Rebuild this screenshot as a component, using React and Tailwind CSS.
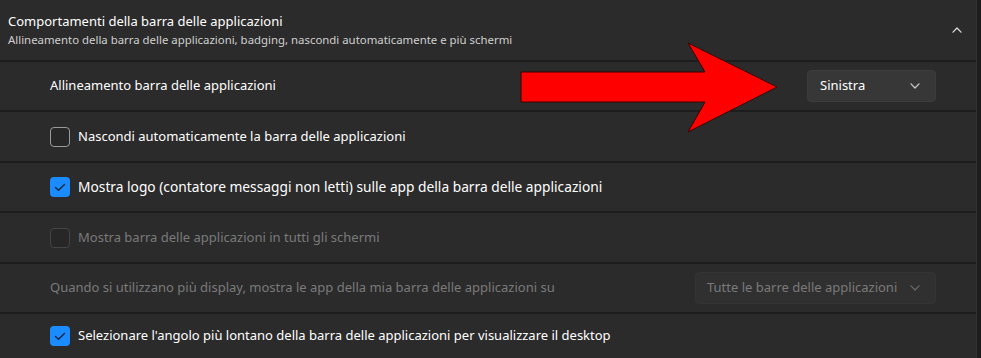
import React from "react";

const font = { fontFamily: '"Segoe UI", "Noto Sans", "Open Sans", sans-serif' };

function Chevron({ className = "", up = false }) {
  return (
    <svg width="10" height="6" viewBox="0 0 10 6" className={className} fill="none">
      <path
        d={up ? "M1 5.2 L5 1 L9 5.2" : "M1 0.8 L5 5 L9 0.8"}
        stroke="currentColor"
        strokeWidth="1.2"
        strokeLinecap="round"
        strokeLinejoin="round"
      />
    </svg>
  );
}

function Checkbox({ checked, disabled }) {
  if (checked) {
    return (
      <div className="w-[20px] h-[20px] rounded-[4px] bg-[#1a8cff] flex items-center justify-center shrink-0">
        <svg width="12" height="9" viewBox="0 0 12 9" fill="none">
          <path d="M1.5 4.5 L4.5 7.3 L10.5 1.5" stroke="#0a2540" strokeWidth="1.4" strokeLinecap="round" strokeLinejoin="round" />
        </svg>
      </div>
    );
  }
  return (
    <div
      className={
        "w-[20px] h-[20px] rounded-[4px] border shrink-0 bg-[#272727] " +
        (disabled ? "border-[#444444]" : "border-[#9a9a9a]")
      }
    />
  );
}

function Sep() {
  return <div className="h-[2px] bg-[#1d1d1d]" />;
}

function Row({ h, children }) {
  return (
    <div className="flex items-center pl-[50px] pr-[40px] bg-[#2b2b2b] whitespace-nowrap" style={{ height: h }}>
      {children}
    </div>
  );
}

export default function App() {
  return (
    <div className="w-[981px] h-[358px] overflow-hidden bg-[#1d1d1d] flex" style={font}>
      <div className="w-[977px] relative border-r border-[#333333] flex flex-col">
        {/* Header */}
        <div className="h-[60px] bg-[#2b2b2b] flex items-center pl-[8px] pr-[14px]">
          <div className="flex-1 flex flex-col">
            <div className="text-[13px] leading-[18px] text-[#ffffff]">Comportamenti della barra delle applicazioni</div>
            <div className="text-[11.4px] leading-[16px] text-[#cfcfcf] mt-[2px]">
              Allineamento della barra delle applicazioni, badging, nascondi automaticamente e più schermi
            </div>
          </div>
          <Chevron up className="text-[#e0e0e0]" />
        </div>
        <Sep />
        <Row h={48}>
          <div className="flex-1 text-[13px] text-[#ffffff]">Allineamento barra delle applicazioni</div>
          <div className="w-[129px] h-[32px] rounded-[4px] bg-[#373737] border border-[#3c3c3c] flex items-center justify-between pl-[12px] pr-[15px]">
            <span className="text-[13px] text-[#ffffff]">Sinistra</span>
            <Chevron className="text-[#cccccc]" />
          </div>
        </Row>
        <Sep />
        <Row h={49}>
          <Checkbox />
          <span className="ml-[8px] text-[13px] text-[#ffffff]">Nascondi automaticamente la barra delle applicazioni</span>
        </Row>
        <Sep />
        <Row h={48}>
          <Checkbox checked />
          <span className="ml-[8px] text-[13.75px] text-[#ffffff]">
            Mostra logo (contatore messaggi non letti) sulle app della barra delle applicazioni
          </span>
        </Row>
        <Sep />
        <Row h={49}>
          <Checkbox disabled />
          <span className="ml-[8px] text-[13px] text-[#7a7a7a]">Mostra barra delle applicazioni in tutti gli schermi</span>
        </Row>
        <Sep />
        <Row h={48}>
          <div className="flex-1 text-[13px] text-[#7a7a7a]">
            Quando si utilizzano più display, mostra le app della mia barra delle applicazioni su
          </div>
          <div className="w-[241px] h-[32px] rounded-[4px] bg-[#303030] border border-[#343434] flex items-center justify-between pl-[11px] pr-[15px]">
            <span className="text-[13px] text-[#7a7a7a]">Tutte le barre delle applicazioni</span>
            <Chevron className="text-[#6a6a6a]" />
          </div>
        </Row>
        <Sep />
        <Row h={44}>
          <Checkbox checked />
          <span className="ml-[8px] text-[13px] text-[#ffffff]">
            Selezionare l'angolo più lontano della barra delle applicazioni per visualizzare il desktop
          </span>
        </Row>

        {/* Red arrow overlay */}
        <svg className="absolute left-0 top-0 pointer-events-none" width="981" height="358" viewBox="0 0 981 358">
          <polygon
            points="521,72 705,72 688,43 777,87 688,132 705,102 521,102"
            fill="#ff0000"
            stroke="#3a0000"
            strokeWidth="1"
            strokeLinejoin="miter"
          />
        </svg>
      </div>
    </div>
  );
}
